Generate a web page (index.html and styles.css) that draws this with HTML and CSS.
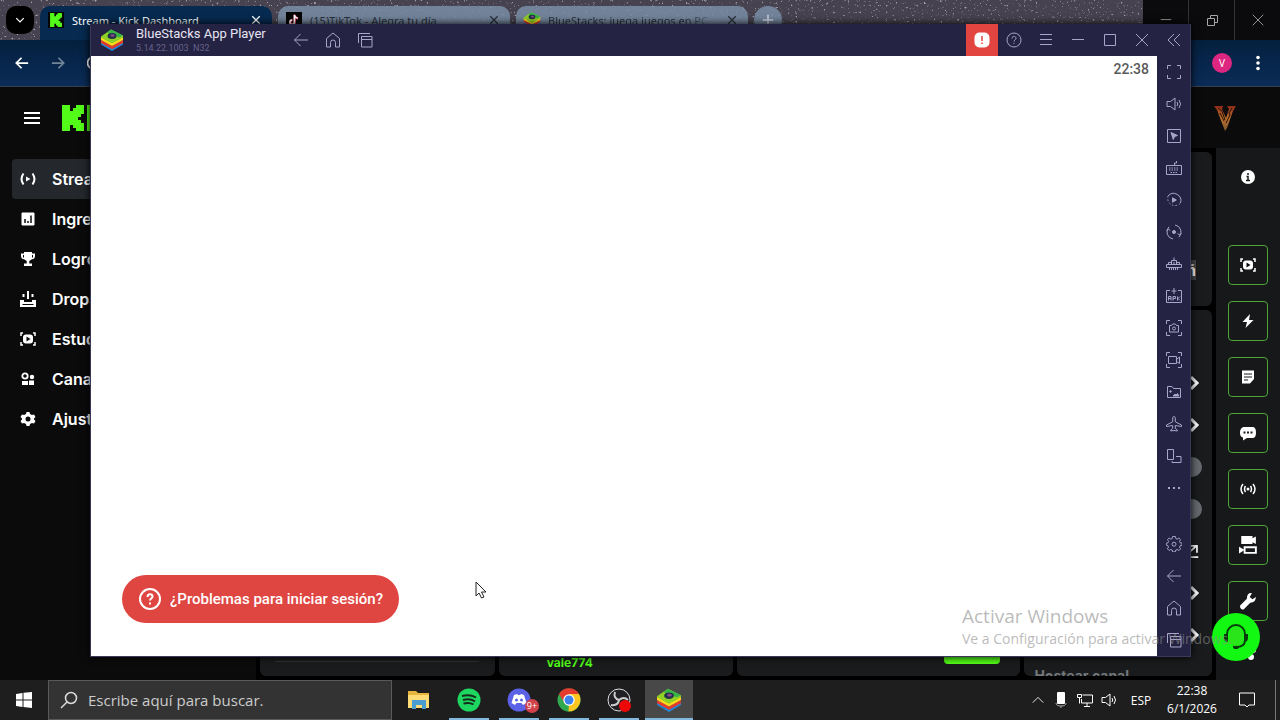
FILE: index.html
```html
<!DOCTYPE html>
<html lang="es">
<head>
<meta charset="utf-8">
<title>BlueStacks App Player</title>
<link rel="stylesheet" href="styles.css">
</head>
<body>
<svg class="sprite" aria-hidden="true">
  <symbol id="bs-logo" viewBox="0 0 24 24">
    <path d="M1 14.500l11 6 11-6v2l-11 6.500-11-6.500z" fill="#2387d8"/>
    <path d="M1 12l11 6 11-6v3l-11 6-11-6z" fill="#e33b2e"/>
    <path d="M1 9l11 6 11-6v3l-11 6-11-6z" fill="#ffd91c"/>
    <path d="M1 8.500l10-7 12 6v2l-11 6-11-6z" fill="#8fd126"/>
    <path d="M11 1.500l12 6-4 2-12-5z" fill="#35b447"/>
    <ellipse cx="12" cy="8" rx="4.500" ry="3" fill="#25304a"/><ellipse cx="12.500" cy="7.500" rx="2" ry="1.200" fill="#8a4e8e"/>
  </symbol>
  <symbol id="k" viewBox="0 0 22 26"><path d="M0 0h8v6h3V3h3V0h8v9h-3v3h-3v3h3v3h3v8h-8v-3h-3v-3H8v6H0z" fill="#53fc18"/></symbol>
  <symbol id="back" viewBox="0 0 16 16"><path d="M15 8H1.500M7.500 2L1.500 8l6 6"/></symbol>
  <symbol id="fwd" viewBox="0 0 16 16"><path d="M1 8h13.500M8.500 2l6 6-6 6"/></symbol>
  <symbol id="home" viewBox="0 0 16 16"><path d="M1.500 6.500L8 1l6.500 5.500v8.500h-4v-4.500a2.500 2.500 0 0 0-5 0V15h-4z"/></symbol>
  <symbol id="stack" viewBox="0 0 16 16"><path d="M4.500 4.500h10.500V15H4.500zM4.500 7.500H15M1.500 11V1.500H13"/></symbol>
  <symbol id="help" viewBox="0 0 16 16"><circle cx="8" cy="8" r="7"/><path d="M6 6.500c0-3 4-2.500 4-.2C10 8 8 7.800 8 9.500M8 10.800v1"/></symbol>
  <symbol id="menu" viewBox="0 0 16 16"><path d="M2 2.500h12M2 7.500h12M2 12.500h12"/></symbol>
  <symbol id="min" viewBox="0 0 16 16"><path d="M2 7.500h12"/></symbol>
  <symbol id="max" viewBox="0 0 16 16"><path d="M2.500 2.500h11v11h-11z"/></symbol>
  <symbol id="restore" viewBox="0 0 16 16"><path d="M3.500 6.500h7v7h-7zM6.500 6.500v-3h7v7h-3"/></symbol>
  <symbol id="close" viewBox="0 0 16 16"><path d="M2 2l12 12M14 2L2 14"/></symbol>
  <symbol id="collapse" viewBox="0 0 16 16"><path d="M8 2L2 8l6 6M14 2L8 8l6 6"/></symbol>
  <symbol id="full" viewBox="0 0 16 16"><path d="M1.500 5V1.500H5M11 1.500h3.500V5M14.500 11v3.500H11M5 14.500H1.500V11"/></symbol>
  <symbol id="sound" viewBox="0 0 16 16"><path d="M1 5.500h3.500L9 2v12l-4.500-3.500H1zM11 6q1.500 2 0 4M13 4q3 4 0 8"/></symbol>
  <symbol id="cursor" viewBox="0 0 16 16"><path d="M1.500 1.500h13v13h-13z"/><path d="M5 4.500l6.500 3-3 1-1.200 3z" fill="currentColor"/></symbol>
  <symbol id="keys" viewBox="0 0 16 16"><path d="M.5 5.500h15v9H.5zM8.500 5V3h2V1"/><path d="M3 8h10M3 10h10M4.500 12.500h7" stroke-dasharray="1.500 1"/></symbol>
  <symbol id="macro" viewBox="0 0 16 16"><path d="M2 4a7.300 7.300 0 0 1 12.500 7"/><path d="M14 11.500A7.300 7.300 0 0 1 2 4" stroke-dasharray="1.500 2"/><path d="M6.500 5.800l3.800 2.200-3.800 2.200z" fill="currentColor"/></symbol>
  <symbol id="rotate" viewBox="0 0 16 16"><path d="M7 15A7.200 7.200 0 0 1 3 2.800M9 1a7.200 7.200 0 0 1 4 12.200M.8 7l1.500-2 2 1.500M11.500 9.500l2 1.500 1.700-2"/><circle cx="8" cy="8" r="1.500" fill="currentColor"/></symbol>
  <symbol id="multi" viewBox="0 0 16 16"><path d="M.5 8.500h15v3H.5zM2.500 8.500V6.500H5M13.500 8.500V6.500H11M5.500 8.500v-4h5v4M8 4.500V1.500M8 6v2.500"/><path d="M3 13h10" stroke-dasharray="1 1" stroke-width="2"/></symbol>
  <symbol id="apk" viewBox="0 0 16 16"><path d="M4 2.500H.5V14.500h15v-12H12M8 0v6M5.500 3h5M2.500 12.500v-4H5v4M2.500 10.500H5M7 12.500v-4h2.500v2H7M11.500 8.500v4M14 8.500l-2 2 2 2"/></symbol>
  <symbol id="camera" viewBox="0 0 16 16"><path d="M.5 4V.5H4M12 .5h3.500V4M15.500 12v3.500H12M4 15.500H.5V12M3.500 5.500h2l1-1.500h3l1 1.500h2v6.500h-9z"/><circle cx="8" cy="8.500" r="1.500"/></symbol>
  <symbol id="video" viewBox="0 0 16 16"><path d="M.5 4V.5H4M12 .5h3.500V4M15.500 12v3.500H12M4 15.500H.5V12M2.500 4.500h8v7h-8zM10.500 7.500L13.500 5v6.500l-3-2"/></symbol>
  <symbol id="media" viewBox="0 0 16 16"><path d="M1.500 13.500v-11H6l1.500 2h7v9z"/><path d="M7 12l2-2 1 1 1.500-1.500L13 12z" fill="currentColor"/><circle cx="4.500" cy="7.500" r=".8" fill="currentColor"/></symbol>
  <symbol id="plane" viewBox="0 0 16 16"><path d="M8 .5c1 0 1.300 1 1.300 2.500v2.800l6.200 3.200v1.500l-6.200-1v3l2 1.500v1L8 14.500l-3.300.5v-1l2-1.500v-3l-6.200 1V9l6.200-3.200V3C6.700 1.500 7 .5 8 .5z"/></symbol>
  <symbol id="shake" viewBox="0 0 16 16"><path d="M1.500 1.500h6v10h-6zM10 8.500h5v6H6V13"/></symbol>
  <symbol id="dots" viewBox="0 0 16 16"><path d="M2 8h2M7 8h2M12 8h2" stroke-width="2"/></symbol>
  <symbol id="gear" viewBox="0 0 16 16"><path d="M6.600.5h2.800l.4 2 1.400.6 1.700-1.100 1.600 1.600-1 1.800.6 1.400 2 .4v2l-2 .5-.6 1.400 1.100 1.700-1.700 1.700-1.700-1-1.400.5-.4 1.900H6.600l-.4-1.900-1.400-.5-1.700 1-1.700-1.700 1.100-1.700L1.900 9.700l-1.500-.5v-2l1.600-.4.6-1.400-1.100-1.800L3.100 2l1.700 1.100 1.400-.6z"/><circle cx="8" cy="8.200" r="2"/></symbol>
  <symbol id="chev" viewBox="0 0 16 16"><path d="M5 2l6 6-6 6"/></symbol>
  <symbol id="live" viewBox="0 0 16 16"><path d="M3.500 2.500q-4 5.500 0 11M12.500 2.500q4 5.500 0 11" stroke-width="2"/><path d="M6 5.500l4.500 2.500L6 10.500z" fill="currentColor" stroke="none"/></symbol>
  <symbol id="chart" viewBox="0 0 16 16"><path d="M2 2h12v12H2z" fill="currentColor"/><path d="M5 12V8M8 12v-2M11 12V4.500" stroke="#0b0b0b" stroke-width="1.500"/></symbol>
  <symbol id="cup" viewBox="0 0 16 16"><path d="M4 1h8v1.500h3V5q0 3-3.500 3.500L9.300 10v2.500H12V15H4v-2.500h2.700V10L4.500 8.500Q1 8 1 5V2.500h3z" fill="currentColor" stroke="none"/><path d="M3.500 4v2.500M12.500 4v2.500" stroke="#0b0b0b"/></symbol>
  <symbol id="drop" viewBox="0 0 16 16"><path d="M8 0v8M3.500 3v3M12.500 3v3" stroke-width="2"/><path d="M0 9h4v2h8V9h4v7H0z" fill="currentColor" stroke="none"/><path d="M2.500 13.500h11" stroke="#0b0b0b"/></symbol>
  <symbol id="studio" viewBox="0 0 16 16"><path d="M1 5V2h2M13 2h2v3M15 11v3h-2M3 14H1v-3" stroke-width="1.500"/><rect x="3" y="3.500" width="10" height="9" rx="3" fill="currentColor" stroke="none"/><path d="M6.500 5.500l4 2.500-4 2.500z" fill="#0b0b0b" stroke="none"/></symbol>
  <symbol id="people" viewBox="0 0 16 16"><circle cx="5" cy="5" r="2.700" stroke-width="1.800"/><circle cx="12" cy="6" r="2.200" fill="currentColor" stroke="none"/><path d="M2 10h6v4H2zM9 9.500h5v4.500H9z" fill="currentColor" stroke="none"/></symbol>
  <symbol id="cog" viewBox="0 0 16 16"><path d="M6.500 1h3l.5 2 2 1 2-.6L15.500 6 14 7.500v1L15.500 10 14 12.600l-2-.6-2 1-.5 2h-3L6 13l-2-1-2 .6L.5 10 2 8.500v-1L.5 6 2 3.400 4 4l2-1z" fill="currentColor" stroke="none"/><circle cx="8" cy="8" r="2.500" fill="#0b0b0b" stroke="none"/></symbol>
  <symbol id="bolt" viewBox="0 0 16 16"><path d="M10 1L2.500 9H7l-1.500 6L13.500 7H9z" fill="currentColor" stroke="none"/></symbol>
  <symbol id="note" viewBox="0 0 16 16"><path d="M2 1.500h12V10l-4 4.500H2z" fill="currentColor" stroke="none"/><path d="M4 5h8M4 8h8M4 11h4" stroke="#191b1d"/></symbol>
  <symbol id="chat" viewBox="0 0 16 16"><path d="M3.500 2h9Q16 2 16 7.500T12.500 13H7l-4 2.500v-3Q0 12 0 7.500T3.500 2z" fill="currentColor" stroke="none"/><path d="M3.500 7.500h2M7 7.500h2M10.500 7.500h2" stroke="#191b1d" stroke-width="2"/></symbol>
  <symbol id="signal" viewBox="0 0 16 16"><path d="M3 3q-4 5 0 10M13 3q4 5 0 10M5.500 5q-2 3 0 6M10.500 5q2 3 0 6" stroke-width="1.500"/><circle cx="8" cy="8" r="1.500" fill="currentColor" stroke="none"/></symbol>
  <symbol id="cams" viewBox="0 0 16 16"><path d="M2 0h10v2l3-1.500V7l-3-1.500V7H2z" fill="currentColor" stroke="none"/><path d="M5 10h10v5H5z" stroke-width="1.700"/><path d="M5 12.500L0 9.500v6z" fill="currentColor" stroke="none"/></symbol>
  <symbol id="wrench" viewBox="0 0 16 16"><path d="M15 4.500l-3 2-2.500-2L11.500 1Q7 .5 7 6L1 12q-.5 2 1 3t2.500 0L10 9.500q5 0 5-5z" fill="currentColor" stroke="none"/></symbol>
  <symbol id="out" viewBox="0 0 16 16"><path d="M2 11L12 2M5 2h7.500v8M1 15h13" stroke-width="2"/></symbol>
</svg>

<main class="desktop">
  <section class="browser">
    <header class="tabstrip">
      <svg class="stars" aria-hidden="true"><filter id="grain" x="0" y="0" width="100%" height="100%"><feTurbulence type="fractalNoise" baseFrequency=".42" numOctaves="2" seed="8"/><feColorMatrix values="0 0 0 0 .78 0 0 0 0 .78 0 0 0 0 .84 6 0 0 0 -3.900"/></filter><rect width="100%" height="100%" filter="url(#grain)"/></svg>
      <button class="tab-search" aria-label="Buscar pestañas"><svg class="i10 thick turn" ><use href="#chev"/></svg></button>
      <div class="tab active"><span class="fav dark"><svg class="kfav"><use href="#k"/></svg></span><span class="tab-title">Stream - Kick Dashboard</span><button aria-label="Cerrar pestaña"><svg class="i10 thick"><use href="#close"/></svg></button></div>
      <div class="tab"><span class="fav dark"><svg class="i12" viewBox="0 0 16 16"><path d="M9 1v10a3 3 0 1 1-3-3M9 2q1 3.500 4.500 4" stroke="#f2486b" stroke-width="3"/><path d="M8.500 1v10a3 3 0 1 1-3-3M8.500 2q1 3 4.500 3.500" stroke="#fff" stroke-width="2"/></svg></span><span class="tab-title">(15)TikTok - Alegra tu día</span><button aria-label="Cerrar pestaña"><svg class="i10 thick"><use href="#close"/></svg></button></div>
      <div class="tab"><span class="fav"><svg class="i18"><use href="#bs-logo"/></svg></span><span class="tab-title fade">BlueStacks: juega juegos en PC</span><button aria-label="Cerrar pestaña"><svg class="i10 thick"><use href="#close"/></svg></button></div>
      <button class="new-tab" aria-label="Nueva pestaña"><svg class="i12" viewBox="0 0 16 16"><path d="M8 1v14M1 8h14" stroke-width="2"/></svg></button>
      <div class="caption"><button aria-label="Minimizar"><svg class="i14"><use href="#min"/></svg></button><button aria-label="Restaurar"><svg class="i16"><use href="#restore"/></svg></button><button aria-label="Cerrar"><svg class="i14"><use href="#close"/></svg></button></div>
    </header>
    <div class="toolbar">
      <button aria-label="Atrás"><svg class="i14 thick"><use href="#back"/></svg></button>
      <button class="dim" aria-label="Adelante"><svg class="i14 thick"><use href="#fwd"/></svg></button>
      <button aria-label="Recargar"><svg class="i14 thick" viewBox="0 0 16 16"><path d="M14 5a7 7 0 1 0 0 6"/></svg></button>
      <span class="profile">V</span>
      <button aria-label="Menú"><svg class="i16" viewBox="0 0 16 16"><g fill="#fff" stroke="none"><circle cx="8" cy="2.500" r="1.800"/><circle cx="8" cy="8" r="1.800"/><circle cx="8" cy="13.500" r="1.800"/></g></svg></button>
    </div>
    <div class="site-head">
      <button aria-label="Abrir menú"><svg class="burger" viewBox="0 0 16 14"><path d="M0 2h16M0 7h16M0 12h16" stroke-width="2"/></svg></button>
      <svg class="kick" viewBox="0 0 34 26"><use href="#k" width="22" height="26"/><path d="M25 0h8v26h-8z" fill="#53fc18" stroke="none"/></svg>
      <svg class="v-logo" viewBox="0 0 26 26"><defs><linearGradient id="fire" x2="0" y2="1"><stop stop-color="#8f2a18"/><stop offset=".5" stop-color="#b9702c"/><stop offset="1" stop-color="#7a5530"/></linearGradient></defs><path d="M2 1h9l-1 3 4 9 3-9-2-3h9l-3 5-6 17-2 3L5 5z" fill="url(#fire)" stroke="none"/><path d="M6 3l4 3 3 9M20 3l-3 5 1 2-4 8M8 8l4 8" stroke="#231008"/></svg>
    </div>
    <div class="site">
      <nav class="nav">
        <a class="on" href="#"><svg class="i16"><use href="#live"/></svg>Stream</a>
        <a href="#"><svg class="i16"><use href="#chart"/></svg>Ingresos</a>
        <a href="#"><svg class="i16"><use href="#cup"/></svg>Logros</a>
        <a href="#"><svg class="i16"><use href="#drop"/></svg>Drops</a>
        <a href="#"><svg class="i16"><use href="#studio"/></svg>Estudio</a>
        <a href="#"><svg class="i16"><use href="#people"/></svg>Canal</a>
        <a href="#"><svg class="i16"><use href="#cog"/></svg>Ajustes</a>
      </nav>
      <div class="cards">
        <section class="card first"><hr></section>
        <section class="card chatbox"><b>vale774</b></section>
        <section class="card send"><button class="green" aria-label="Enviar"></button></section>
        <div class="col">
          <section class="card upper"><span class="tag">ñ</span></section>
          <section class="card lower">
            <div class="row"><svg class="i16 arrow"><use href="#chev"/></svg></div>
            <div class="row"><svg class="i16 arrow"><use href="#chev"/></svg></div>
            <div class="row"><input type="checkbox" aria-label="Opción de chat 1"></div>
            <div class="row"><input type="checkbox" aria-label="Opción de chat 2"></div>
            <div class="row"><svg class="i14"><use href="#out"/></svg></div>
            <div class="row"><svg class="i16 arrow"><use href="#chev"/></svg></div>
            <div class="row"><svg class="i16 arrow"><use href="#chev"/></svg></div>
            <b>Hostear canal</b>
          </section>
        </div>
      </div>
      <aside class="dock">
        <svg class="i14 info" viewBox="0 0 14 14"><circle cx="7" cy="7" r="7" fill="#fff" stroke="none"/><path d="M7 3v2M5.500 6.500H7v4M5 10.500h4" stroke="#16181a" stroke-width="1.500"/></svg>
        <button aria-label="Estudio"><svg class="i16"><use href="#studio"/></svg></button>
        <button aria-label="Acciones"><svg class="i16"><use href="#bolt"/></svg></button>
        <button aria-label="Notas"><svg class="i16"><use href="#note"/></svg></button>
        <button aria-label="Chat"><svg class="i16"><use href="#chat"/></svg></button>
        <button aria-label="Señal"><svg class="i16"><use href="#signal"/></svg></button>
        <button aria-label="Cámaras"><svg class="i18"><use href="#cams"/></svg></button>
        <button aria-label="Herramientas"><svg class="i18"><use href="#wrench"/></svg></button>
        <button aria-label="Más"><svg class="i16" viewBox="0 0 16 16"><g fill="#fff" stroke="none"><circle cx="3" cy="9" r="3"/><circle cx="13" cy="6" r="3"/><circle cx="11" cy="13" r="3"/></g></svg></button>
      </aside>
    </div>
    <button class="support" aria-label="Soporte"><svg viewBox="0 0 26 28"><path d="M4 13V11a9 9 0 0 1 18 0v2M22 17q0 7-9 7" stroke="#083b0b" stroke-width="2"/><path d="M1 11h4v8q-4 0-4-4zM21 11h4v4q0 4-4 4z" fill="#083b0b" stroke="none"/><ellipse cx="13" cy="24" rx="3" ry="2" fill="#083b0b" stroke="none"/><path d="M6 12q1-7 7-7t7 7v6q-3 5-7 5t-7-5z" fill="#2be51b" stroke="none"/></svg></button>
  </section>

  <section class="window">
    <header class="titlebar">
      <svg class="i24"><use href="#bs-logo"/></svg>
      <div class="app"><strong>BlueStacks App Player</strong><span>5.14.22.1003&nbsp; N32</span></div>
      <div class="tools"><button aria-label="Atrás"><svg class="i16"><use href="#back"/></svg></button><button aria-label="Inicio"><svg class="i16"><use href="#home"/></svg></button><button aria-label="Recientes"><svg class="i16"><use href="#stack"/></svg></button></div>
      <div class="tools end"><button class="alert" aria-label="Alerta"><svg class="i16" viewBox="0 0 16 16"><rect x=".5" y=".5" width="15" height="15" rx="5" fill="#fff" stroke="none"/><path d="M8 4v5M8 10.500v1.500" stroke="#e24440" stroke-width="1.500"/></svg></button><button aria-label="Ayuda"><svg class="i16"><use href="#help"/></svg></button><button aria-label="Menú"><svg class="i16"><use href="#menu"/></svg></button><button aria-label="Minimizar"><svg class="i16"><use href="#min"/></svg></button><button aria-label="Maximizar"><svg class="i16"><use href="#max"/></svg></button><button aria-label="Cerrar"><svg class="i16"><use href="#close"/></svg></button><button aria-label="Contraer"><svg class="i16"><use href="#collapse"/></svg></button></div>
    </header>
    <div class="body">
      <div class="screen">
        <time>22:38</time>
        <button class="problem"><svg class="i24" viewBox="0 0 24 24"><circle cx="12" cy="12" r="10" stroke-width="2"/><path d="M9.500 10c0-4 5-3.500 5-.5 0 2-2.500 2-2.500 4M12 15.500v2" stroke-width="2"/></svg>¿Problemas para iniciar sesión?</button>
      </div>
      <aside class="side">
        <div><button aria-label="Pantalla completa"><svg class="i16"><use href="#full"/></svg></button><button aria-label="Volumen"><svg class="i16"><use href="#sound"/></svg></button><button aria-label="Cursor"><svg class="i16"><use href="#cursor"/></svg></button><button aria-label="Teclado"><svg class="i16"><use href="#keys"/></svg></button><button aria-label="Macros"><svg class="i16"><use href="#macro"/></svg></button><button aria-label="Sincronizar"><svg class="i16"><use href="#rotate"/></svg></button><button aria-label="Instancias"><svg class="i16"><use href="#multi"/></svg></button><button aria-label="Instalar APK"><svg class="i16"><use href="#apk"/></svg></button><button aria-label="Captura"><svg class="i16"><use href="#camera"/></svg></button><button aria-label="Grabar"><svg class="i16"><use href="#video"/></svg></button><button aria-label="Multimedia"><svg class="i16"><use href="#media"/></svg></button><button aria-label="Modo avión"><svg class="i16"><use href="#plane"/></svg></button><button aria-label="Girar"><svg class="i16"><use href="#shake"/></svg></button><button aria-label="Más"><svg class="i16"><use href="#dots"/></svg></button></div>
        <div><button aria-label="Ajustes"><svg class="i16"><use href="#gear"/></svg></button><button aria-label="Atrás"><svg class="i16"><use href="#back"/></svg></button><button aria-label="Inicio"><svg class="i16"><use href="#home"/></svg></button><button aria-label="Recientes"><svg class="i16"><use href="#stack"/></svg></button></div>
      </aside>
    </div>
  </section>
  <div class="watermark"><p class="wm-title">Activar Windows</p><p>Ve a Configuración para activar Windows.</p></div>
  <svg class="pointer" viewBox="0 0 12 18"><path d="M1 1v14l3-3 2.500 5 2.500-1-2.500-5H11z" fill="#fff" stroke="#222"/></svg>
</main>

<footer class="taskbar">
  <button class="start" aria-label="Inicio"><svg class="i16" viewBox="0 0 16 16"><path d="M0 2l6.500-1v6.500H0zM7.500.8L16 0v7.500H7.500zM0 8.500h6.500V15L0 14zM7.500 8.500H16V16l-8.500-1z" fill="#fff" stroke="none"/></svg></button>
  <label class="search"><svg class="i18" viewBox="0 0 18 18"><circle cx="11" cy="7" r="5.500" stroke-width="1.500"/><path d="M7 11l-6 6" stroke-width="1.500"/></svg><input type="text" placeholder="Escribe aquí para buscar." aria-label="Escribe aquí para buscar"></label>
  <div class="apps">
    <button aria-label="Explorador"><svg class="i24" viewBox="0 0 24 24"><g stroke="none"><path d="M1 3h8l2 2h11v15H1z" fill="#e8b63f"/><path d="M1 7h21v13H1z" fill="#ffdc76"/><path d="M5 12h14v9h-4v-4H9v4H5z" fill="#4a9dd1"/></g></svg></button>
    <button class="run" aria-label="Spotify"><svg class="i24" viewBox="0 0 24 24"><circle cx="12" cy="12" r="11.500" fill="#1ed760" stroke="none"/><path d="M5 8q8-2 14 1.500M6 12q7-2 12 1.500M6.500 15.500q6-1.500 10 1" stroke="#152b1c" stroke-width="2"/></svg></button>
    <button class="run" aria-label="Discord"><svg class="i24" viewBox="0 0 24 24"><circle cx="12" cy="12" r="11.500" fill="#5b62e8" stroke="none"/><path d="M7 7l3-1 1 1h2l1-1 3 1 2.500 8-3.500 2-1.500-2h-5L8 17l-3.500-2z" fill="#fff" stroke="none"/><circle cx="9.500" cy="12" r="1.500" fill="#5b62e8" stroke="none"/><circle cx="14.500" cy="12" r="1.500" fill="#5b62e8" stroke="none"/></svg><span class="badge">9+</span></button>
    <button class="run" aria-label="Chrome"><svg class="i24" viewBox="0 0 24 24"><g stroke="none"><circle cx="12" cy="12" r="11.500" fill="#2fa84f"/><path d="M12 12L2 6A11.500 11.500 0 0 1 22 6z" fill="#e33b2e"/><path d="M12 12V6h10q4 8-3 15-3 2.500-7.500 2.500z" fill="#fbc61f"/><path d="M2 6l5 8 5-8z" fill="#e33b2e"/><circle cx="12" cy="12" r="5.700" fill="#fff"/><circle cx="12" cy="12" r="4.500" fill="#3b82ec"/></g></svg></button>
    <button class="run" aria-label="OBS"><svg class="i24" viewBox="0 0 24 24"><circle cx="12" cy="12" r="11" fill="#202024" stroke="#ddd"/><path d="M12 12q-6-2-4-8M12 12q5-4 9 0M12 12q-1 6-8 5" stroke="#ccc" stroke-width="2"/><circle cx="18" cy="18" r="6" fill="#ee0707" stroke="none"/></svg></button>
    <button class="run current" aria-label="BlueStacks"><svg class="i26"><use href="#bs-logo"/></svg></button>
  </div>
  <div class="tray">
    <svg class="i14" viewBox="0 0 16 16"><path d="M2 11l6-6 6 6"/></svg>
    <svg class="i16" viewBox="0 0 16 16"><rect x="4" y="0" width="8" height="12" rx="1" fill="#fff" stroke="none"/><path d="M3 11q0 3 5 3t5-3M8 14v2" stroke="#aaa"/></svg>
    <svg class="i16" viewBox="0 0 16 16"><path d="M5.500 3H15.500v8h-11V7M10 11v3M7 14.500h6M.5 2.500h4v3h-4zM2.500 5.500v6"/></svg>
    <svg class="i16"><use href="#sound"/></svg>
    <span class="lang">ESP</span>
    <div class="clock"><time>22:38</time><time>6/1/2026</time></div>
    <button aria-label="Notificaciones"><svg class="i18" viewBox="0 0 18 18"><path d="M1.500 2h15v12H11l-2 2-2-2H1.500z"/></svg></button>
    <span class="peek"></span>
  </div>
</footer>
</body>
</html>
```
FILE: styles.css
```css
* { box-sizing: border-box; }
body { margin: 0; height: 100vh; display: flex; flex-direction: column; overflow: hidden; background: #000; color: #fff; font-family: "Noto Sans", sans-serif; }
button { border: 0; padding: 0; background: none; color: inherit; font: inherit; display: flex; align-items: center; justify-content: center; }
svg { flex: none; fill: none; stroke: currentColor; display: block; }
.sprite { position: absolute; width: 0; height: 0; }
#bs-logo path, #bs-logo ellipse, #k path { stroke: none; }
.i10 { width: 10px; height: 10px; }
.i12 { width: 12px; height: 12px; }
.i14 { width: 14px; height: 14px; }
.i16 { width: 16px; height: 16px; }
.i18 { width: 18px; height: 18px; }
.i24 { width: 24px; height: 24px; }
.i26 { width: 26px; height: 26px; }
.thick { stroke-width: 2; }
.turn { transform: rotate(90deg); }

.desktop { position: relative; flex: 1; min-height: 0; display: flex; }
.browser { position: relative; flex: 1; min-width: 0; display: flex; flex-direction: column; }

.tabstrip { position: relative; height: 40px; flex: none; display: flex; align-items: flex-start; padding: 6px 0 0 6px; background: #46424f; font-size: 11px; }
.stars { position: absolute; inset: 0; width: 100%; height: 100%; stroke: none; opacity: .6; }
.tab-search { position: relative; width: 28px; height: 28px; border-radius: 10px; background: #000; margin-right: 6px; }
.tab { position: relative; width: 232px; height: 34px; display: flex; align-items: center; gap: 8px; padding: 0 11px 6px 8px; margin-right: 6px; border-radius: 10px 10px 0 0; background: rgba(122, 142, 166, .85); color: #28303c; }
.tab.active { background: #062a50; color: #fff; }
.tab-title { flex: 1; white-space: nowrap; }
.fade { mask-image: linear-gradient(90deg, #000 80%, transparent); }
.fav { width: 16px; height: 16px; display: flex; align-items: center; justify-content: center; color: #fff; }
.dark { background: #050505; }
.kfav { width: 12px; height: 14px; }
.new-tab { position: relative; width: 28px; height: 28px; border-radius: 14px; background: rgba(122, 142, 166, .85); color: #cbd3df; }
.caption { position: relative; display: flex; margin: -6px 0 0 auto; width: 137px; height: 40px; background: #0b0b0d; color: #a5a5a5; }
.caption button { flex: 1; }
.caption button + button { border-left: 1px solid #333338; }

.toolbar { height: 47px; flex: none; display: flex; align-items: center; gap: 8px; padding: 0 8px; background: linear-gradient(#04203e, #0b2c58); border-bottom: 1px solid #34404d; }
.toolbar button { width: 28px; height: 28px; }
.toolbar .dim { color: #71859b; }
.profile { width: 20px; height: 20px; border-radius: 10px; margin: 0 4px 0 auto; background: #dc267f; font-size: 10px; line-height: 20px; text-align: center; }

.site-head { height: 61px; flex: none; display: flex; align-items: center; padding: 0 42px 0 24px; background: #0b0b0b; }
.burger { width: 16px; height: 14px; }
.kick { width: 34px; height: 26px; margin-left: 22px; }
.v-logo { width: 26px; height: 26px; margin-left: auto; }

.site { flex: 1; min-height: 0; display: flex; background: #000; font-family: Inter, sans-serif; }
.nav { width: 256px; flex: none; padding: 11px 12px; background: #0b0b0b; }
.nav a { height: 40px; display: flex; align-items: center; gap: 16px; padding: 0 8px; border-radius: 4px; color: #fff; font-size: 16px; font-weight: 600; text-decoration: none; }
.nav .on { background: #24272c; }
.cards { flex: 1; min-width: 0; display: grid; grid-template-columns: 234fr 234fr 282fr 187fr; gap: 4px; padding: 4px; }
.card { min-height: 0; border-radius: 6px; background: #191b1d; overflow: hidden; }
.first, .chatbox, .send { display: flex; flex-direction: column; justify-content: flex-end; }
.first hr { width: 204px; margin: 0 auto 14px; border: 0; border-top: 1px solid #303335; }
.chatbox b { padding: 0 0 5px 48px; font-size: 12px; line-height: 16px; color: #53fc18; }
.send { align-items: flex-end; padding: 0 20px 12px; }
.green { width: 56px; height: 32px; border-radius: 4px; background: #53fc18; }
.col { display: flex; flex-direction: column; gap: 4px; min-height: 0; }
.upper { height: 154px; flex: none; display: flex; align-items: flex-end; justify-content: flex-end; padding: 26px 16px; }
.tag { background: #45484b; font-size: 16px; font-weight: 700; line-height: 20px; }
.lower { flex: 1; display: flex; flex-direction: column; padding: 52px 10px 0; }
.row { height: 42px; flex: none; display: flex; align-items: center; justify-content: flex-end; }
.row .i14 { margin-right: 2px; }
.arrow { stroke-width: 3; }
.row input { appearance: none; width: 36px; height: 20px; margin: 0; border-radius: 10px; background: #666a6e; }
.lower b { color: #73787b; font-size: 14px; line-height: 20px; padding-top: 10px; white-space: nowrap; }

.dock { width: 64px; flex: none; display: flex; flex-direction: column; align-items: center; gap: 16px; padding-top: 22px; background: #16181a; overflow: hidden; }
.dock .info { margin-bottom: 45px; }
.dock button { width: 40px; height: 40px; flex: none; border: 1px solid #4ba634; border-radius: 4px; }
.dock button:last-child { border-color: transparent; height: 30px; }
.support { position: absolute; right: 20px; bottom: 19px; width: 48px; height: 48px; border-radius: 24px; background: #12f812; }
.support svg { width: 26px; height: 28px; }

.window { position: absolute; inset: 24px 89px 23px 90px; display: flex; flex-direction: column; border: 1px solid #3b3959; border-top: 0; background: #252343; box-shadow: 0 0 8px #000; font-family: Roboto, sans-serif; }
.titlebar { height: 32px; flex: none; display: flex; align-items: center; padding-left: 9px; color: #a9a5c9; }
.app { width: 149px; margin-left: 12px; display: flex; flex-direction: column; white-space: nowrap; }
.app strong { color: #e6e5f2; font-size: 13px; line-height: 16px; font-weight: 400; }
.app span { color: #66628a; font-size: 9px; line-height: 12px; }
.tools { display: flex; }
.tools button { width: 32px; height: 32px; }
.end { margin-left: auto; }
.alert { background: #e24440; }
.body { flex: 1; min-height: 0; display: flex; }
.screen { flex: 1; display: flex; flex-direction: column; justify-content: space-between; padding: 4px 8px 33px 31px; background: #fff; }
.screen time { align-self: flex-end; color: #5a5a5a; font-size: 14px; line-height: 18px; font-weight: 500; }
.problem { align-self: flex-start; height: 48px; padding: 0 16px; gap: 8px; border-radius: 24px; background: #df4642; color: #fff; font-size: 15px; font-weight: 500; }
.side { width: 33px; flex: none; display: flex; flex-direction: column; justify-content: space-between; align-items: flex-end; color: #a9a5c9; }
.side button { width: 32px; height: 32px; }

.watermark { position: absolute; right: 54px; bottom: 30px; width: 264px; color: rgba(140, 140, 140, .6); font-family: "Open Sans", sans-serif; white-space: nowrap; pointer-events: none; }
.watermark p { margin: 0; font-size: 14px; line-height: 22px; }
.watermark .wm-title { font-size: 19px; line-height: 24px; }
.pointer { position: absolute; left: 475px; top: 580px; width: 12px; height: 20px; }

.taskbar { height: 40px; flex: none; display: flex; background: #1e1e1e; font-family: "Open Sans", sans-serif; }
.start { width: 48px; }
.search { width: 344px; display: flex; align-items: center; gap: 10px; padding: 0 11px; border: 1px solid #5a5a5a; background: #333; color: #ddd; }
.search input { flex: 1; min-width: 0; border: 0; padding: 0; background: none; color: #ddd; font: 15px "Open Sans", sans-serif; }
.search input::placeholder { color: #ccc; opacity: 1; }
.apps { display: flex; gap: 2px; padding-left: 3px; }
.apps button { position: relative; width: 48px; }
.run::after { content: ""; position: absolute; left: 4px; right: 4px; bottom: 0; height: 2px; background: #83b8de; }
.apps .current { background: #484848; }
.current::after { left: 0; right: 0; }
.badge { position: absolute; right: 4px; bottom: 7px; width: 14px; height: 14px; border-radius: 7px; background: #d04149; font-size: 9px; line-height: 14px; text-align: center; }
.tray { display: flex; align-items: center; gap: 8px; margin-left: auto; font-size: 12px; }
.lang { width: 32px; text-align: center; }
.clock { width: 54px; display: flex; flex-direction: column; align-items: center; line-height: 18px; }
.tray button { width: 40px; height: 40px; }
.peek { width: 5px; height: 40px; border-left: 1px solid #777; }
```
